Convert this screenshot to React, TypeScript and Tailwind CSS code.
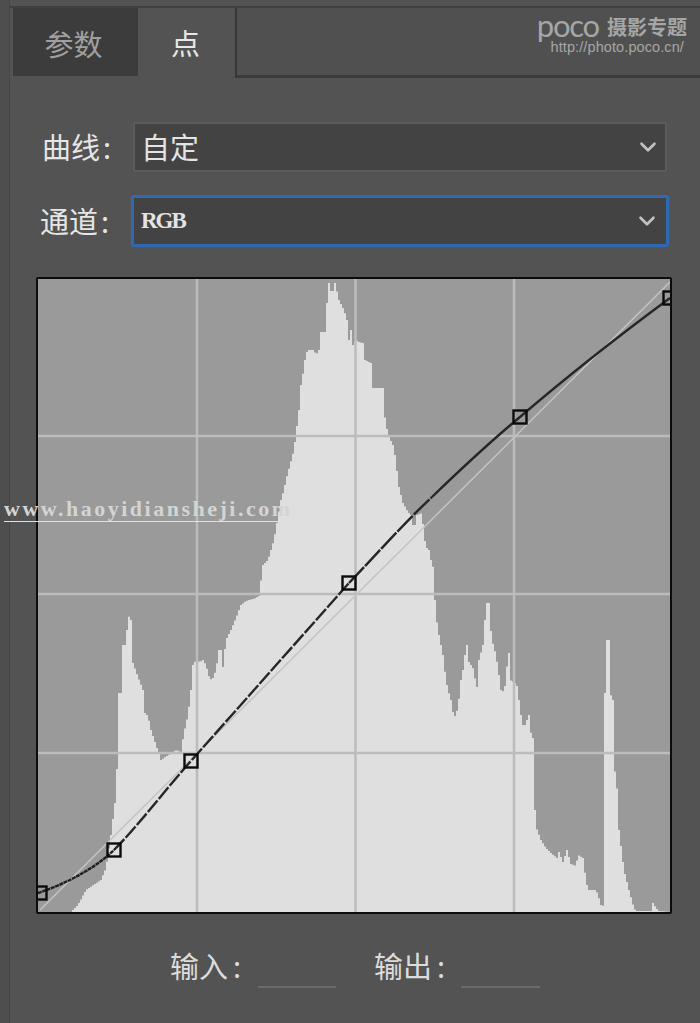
import { ChevronDown } from "lucide-react";

const cjk = { fontFamily: '"Noto Sans CJK SC", "Noto Sans", sans-serif' };

// histogram outline, in page coordinates
const hist = [
  [38, 912], [70, 912], [77, 905], [85, 890], [100, 880], [105, 868], [110, 835], [115, 795], [117, 743], [118, 693],
  [122, 693], [122, 645], [125, 645], [127, 615], [130, 620], [132, 663], [137, 677], [142, 690], [143, 712], [147, 716],
  [150, 730], [155, 745], [160, 760], [175, 750], [180, 752], [183, 733], [187, 715], [190, 690], [192, 665], [195, 660],
  [199, 662], [202, 660], [205, 665], [209, 680], [212, 678], [215, 670], [218, 650], [221, 650], [222, 667], [225, 640],
  [230, 630], [235, 618], [240, 605], [245, 601], [255, 598], [258, 596], [262, 565], [267, 560], [273, 540], [280, 500],
  [283, 490], [285, 480], [293, 450], [295, 434], [298, 410], [300, 385], [303, 368], [305, 352], [308, 352], [308, 350],
  [313, 350], [315, 355], [318, 350], [320, 332], [325, 332], [326, 303], [328, 283], [331, 295], [334, 283], [338, 300],
  [343, 310], [346, 320], [348, 340], [350, 330], [352, 345], [355, 340], [358, 342], [362, 343], [364, 360], [370, 363],
  [371, 388], [382, 388], [383, 410], [385, 425], [388, 437], [393, 447], [395, 463], [398, 487], [402, 503], [407, 512],
  [410, 515], [413, 530], [416, 515], [421, 513], [423, 535], [425, 547], [428, 550], [430, 560], [433, 570], [433, 590],
  [434, 600], [435, 615], [437, 630], [440, 645], [442, 655], [445, 680], [447, 690], [450, 700], [452, 712], [454, 716],
  [457, 708], [460, 680], [463, 665], [465, 645], [468, 645], [468, 662], [470, 665], [473, 670], [475, 687], [477, 687],
  [478, 660], [482, 645], [484, 620], [486, 603], [488, 603], [489, 622], [491, 640], [495, 655], [498, 675], [500, 690],
  [503, 692], [505, 680], [507, 653], [509, 653], [509, 680], [513, 682], [516, 686], [518, 700], [520, 715], [522, 725],
  [525, 725], [527, 715], [529, 715], [529, 730], [532, 738], [533, 793], [535, 827], [540, 840], [545, 848], [550, 853],
  [556, 858], [558, 852], [562, 862], [566, 850], [570, 864], [575, 866], [577, 855], [582, 858], [585, 880], [587, 890],
  [595, 890], [597, 895], [600, 905], [603, 906], [604, 693], [605, 693], [605, 640], [609, 640], [609, 693], [612, 700],
  [613, 763], [617, 797], [618, 830], [623, 870], [628, 890], [633, 908], [635, 911], [650, 911], [652, 903], [655, 908],
  [658, 911], [670, 912],
];

// the real histogram is made of little steps, so sample the outline every 2px
function stepped() {
  const out: string[] = ["38,912"];
  let i = 0;
  for (let x = 38; x < 670; x += 2) {
    while (i < hist.length - 2 && hist[i + 1][0] <= x) i++;
    const [x0, y0] = hist[i];
    const [x1, y1] = hist[i + 1];
    const y = x1 === x0 ? y1 : y0 + ((y1 - y0) * (x - x0)) / (x1 - x0);
    out.push(`${x},${y.toFixed(1)}`, `${x + 2},${y.toFixed(1)}`);
  }
  out.push("670,912");
  return out.join(" ");
}

const handles = [[40, 893], [114, 850], [191, 761], [349, 583], [520, 417], [670, 298]];

function Select({ text, active, mono }: { text: string; active?: boolean; mono?: boolean }) {
  return (
    <div
      className={
        active
          ? "flex h-[52px] w-[538px] items-center justify-between rounded-[3px] border-[3px] border-[#2f69b3] bg-[#434343] pl-[7px] pr-[6px]"
          : "ml-[2px] flex h-[50px] w-[534px] items-center justify-between rounded-[3px] border-2 border-[#5b5b5b] bg-[#434343] pl-[6px] pr-[4px]"
      }
    >
      {mono ? (
        <span className="font-['Liberation_Serif'] text-[23px] font-bold tracking-[-2px] text-[#e4e4e4]">{text}</span>
      ) : (
        <span className="text-[29px] text-[#e4e4e4]" style={cjk}>{text}</span>
      )}
      <ChevronDown size={26} strokeWidth={2.4} className="text-[#c2c2c2]" />
    </div>
  );
}

function Curves() {
  return (
    <svg viewBox="38 279 632 633" className="block h-full w-full">
      <rect x="38" y="279" width="632" height="633" fill="#9a9a9a" />
      <polygon points={stepped()} fill="#dfdfdf" />
      {[197, 355.5, 514].map((x) => (
        <line key={x} x1={x} y1="279" x2={x} y2="912" stroke="#bcbcbc" strokeWidth="2.5" />
      ))}
      {[436, 594, 753].map((y) => (
        <line key={y} x1="38" y1={y} x2="670" y2={y} stroke="#bcbcbc" strokeWidth="2.5" />
      ))}
      <line x1="40" y1="910" x2="670" y2="282" stroke="#c4c4c4" strokeWidth="1.5" />
      <path d="M38 893 C62 885 92 871 114 850" fill="none" stroke="#1f1f1f" strokeWidth="2.4" strokeDasharray="4 0.6" />
      <path d="M114 850 C138 826 165 790 191 761 L349 583" fill="none" stroke="#262626" strokeWidth="2.4" strokeDasharray="15 2" />
      <path d="M349 583 C375 556 405 522 432 497" fill="none" stroke="#262626" strokeWidth="2.4" strokeDasharray="22 1.5" />
      <path d="M432 497 C460 470 490 442 520 417 C570 374 620 335 670 298" fill="none" stroke="#262626" strokeWidth="2.4" />
      {handles.map(([x, y]) => (
        <rect key={x} x={x - 6.5} y={y - 6.5} width="13" height="13" fill="none" stroke="#0a0a0a" strokeWidth="2.4" />
      ))}
    </svg>
  );
}

export default function App() {
  return (
    <div className="relative flex h-[1023px] w-[700px] overflow-hidden bg-[#535353]" style={cjk}>
      {/* left edge */}
      <div className="w-[10px] shrink-0 border-r border-[#474747] bg-[#4e4e4e]" />

      <div className="flex min-w-0 flex-1 flex-col">
        <div className="mt-[6px] flex h-[72px] border-t-2 border-[#414141] pl-[3px]">
          <div className="flex h-[68px] w-[125px] items-center justify-center bg-[#3c3c3c] pr-[4px] pt-[4px] text-[29px] text-[#a0a0a0]">参数</div>
          <div className="flex w-[99px] items-center justify-center border-r-2 border-[#373737] pr-[2px] text-[29px] text-[#e8e8e8]">点</div>
          <div className="flex flex-1 justify-end border-b-[3px] border-[#3c3c3c] bg-[#505050] pr-[13px] pt-[6px]">
            <div className="flex flex-col items-end text-[#a6a6a6]">
              <div className="flex h-[27px] items-start">
                <span className="mr-[8px] mt-[-9px] font-['Lato'] text-[31px] font-normal leading-[40px] tracking-[-1.2px]">poco</span>
                <span className="text-[20px] font-bold leading-[26px]">摄影专题</span>
              </div>
              <span className="mr-[3px] mt-[-2px] font-['Liberation_Sans'] text-[14.5px] leading-[16px] tracking-[0.1px]">http://photo.poco.cn/</span>
            </div>
          </div>
        </div>

        <div className="mt-[44px] flex h-[50px] items-center pl-[32px]">
          <span className="w-[89px] text-[29px] text-[#e6e6e6]">曲线<span className="ml-[3px]">:</span></span>
          <Select text="自定" />
        </div>
        <div className="mt-[23px] flex h-[52px] items-center pl-[30px]">
          <span className="w-[91px] text-[29px] text-[#e6e6e6]">通道<span className="ml-[3px]">:</span></span>
          <Select text="RGB" active mono />
        </div>

        <div className="ml-[26px] mt-[30px] h-[637px] w-[636px] rounded-[2px] border-2 border-[#0c0c0c]">
          <Curves />
        </div>

        <div className="mt-[29px] flex items-start pl-[160px]">
          <span className="w-[88px] text-[29px] leading-[44px] text-[#dcdcdc]">输入<span className="ml-[5px]">:</span></span>
          <span className="mt-[43px] h-[2px] w-[78px] bg-[#6b6b6b]" />
          <span className="ml-[38px] w-[87px] text-[29px] leading-[44px] text-[#dcdcdc]">输出<span className="ml-[5px]">:</span></span>
          <span className="mt-[43px] h-[2px] w-[79px] bg-[#6b6b6b]" />
        </div>
      </div>

      {/* watermark over the panel */}
      <div className="absolute left-[4px] top-[497px] w-[283px] whitespace-nowrap border-b border-[#e0e0e0] font-['Liberation_Serif'] text-[22px] font-bold leading-[24px] tracking-[2.5px] text-[#d4d4d4]">
        www.haoyidiansheji.com
      </div>
    </div>
  );
}
